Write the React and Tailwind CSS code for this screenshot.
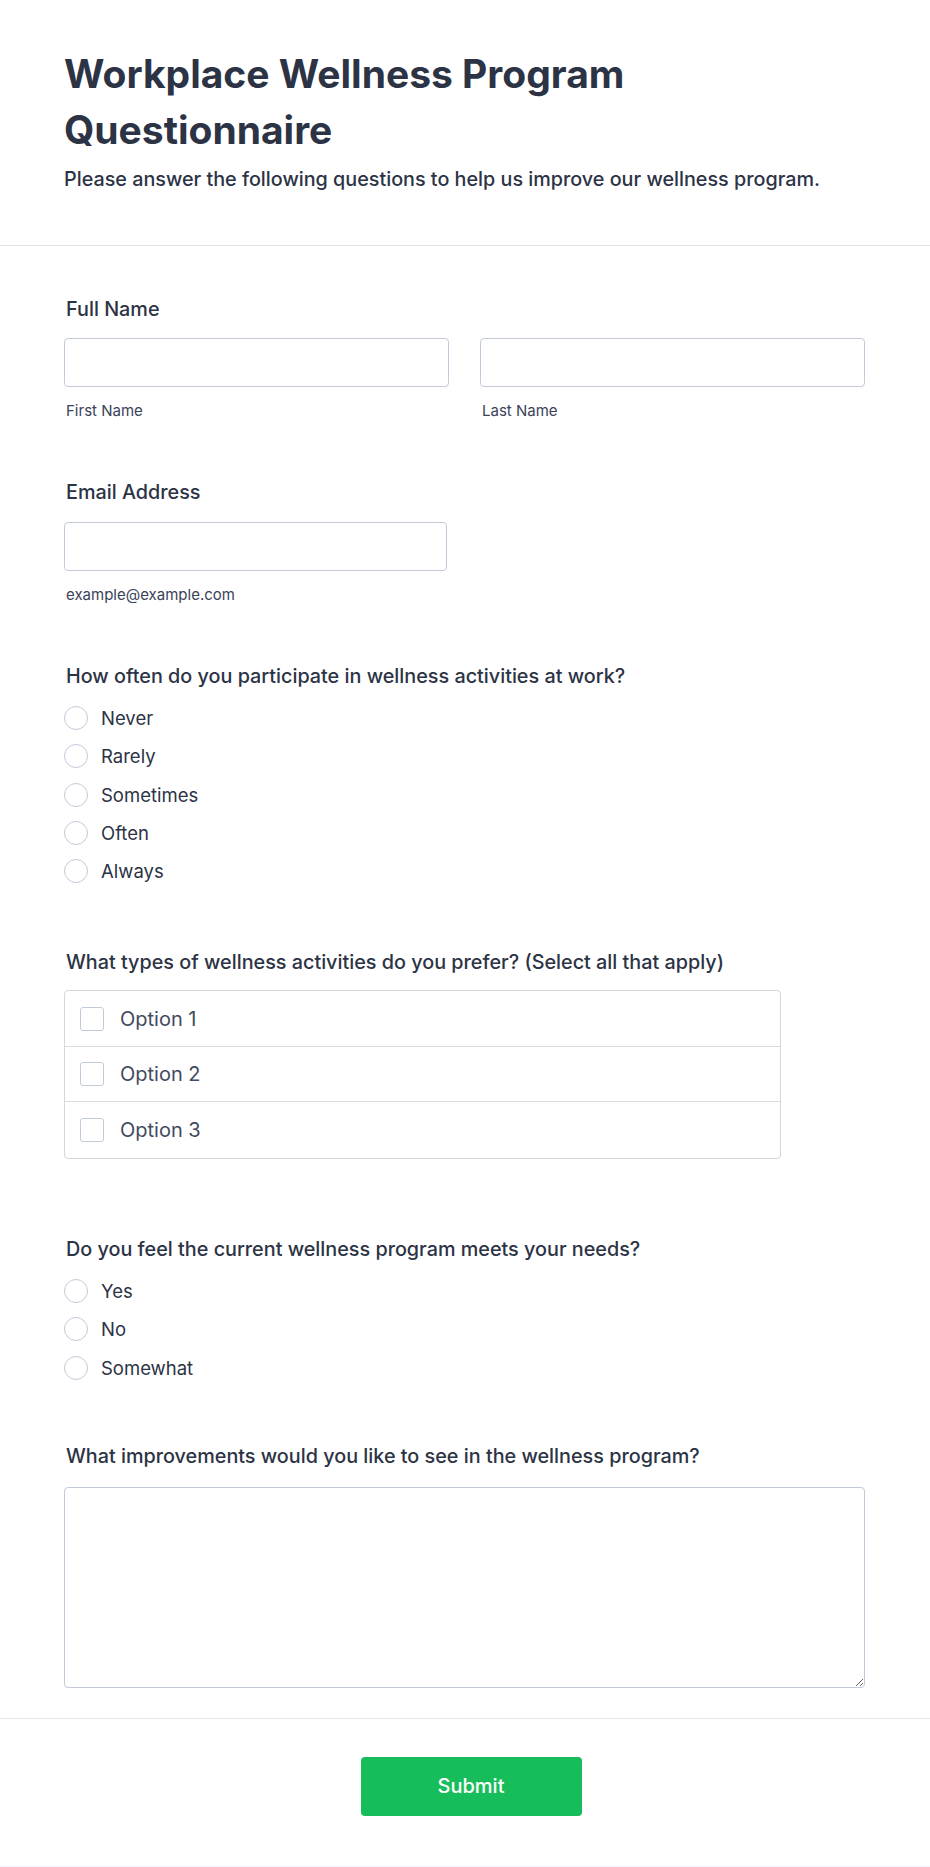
import React from "react";

const font = { fontFamily: "Inter, 'Noto Sans', sans-serif" };

const Label = ({ children, className = "" }) => (
    <div className={`pl-[2px] text-[19.8px] leading-[28px] font-medium text-[#2c3345] ${className}`}>
        {children}
    </div>
);

const SubLabel = ({ children }) => (
    <div className="mt-[14px] pl-[2px] text-[15px] leading-[20px] text-[#394258]">{children}</div>
);

const Radio = ({ label }) => (
    <label className="flex h-[38.3px] items-center gap-[13px]">
        <span className="h-[24px] w-[24px] shrink-0 rounded-full border border-[#c3cad8] bg-white" />
        <span className="text-[18.5px] leading-[28px] text-[#2c3345]">{label}</span>
    </label>
);

const App = () => {
    return (
        <div style={font} className="w-[930px] bg-white">
            <header className="border-b border-[#e2e2e6] pl-[64px] pr-[65px] pt-[46px] pb-[52px]">
                <h1 className="text-[39px] leading-[56px] font-bold text-[#2c3345]">
                    Workplace Wellness Program
                    <br />
                    Questionnaire
                </h1>
                <p className="mt-[7px] text-[19.75px] leading-[28px] font-medium text-[#2c3345]">
                    Please answer the following questions to help us improve our wellness program.
                </p>
            </header>

            <main className="pl-[64px] pr-[65px] pt-[49px] pb-[30px]">
                <Label>Full Name</Label>
                <div className="mt-[15px] grid grid-cols-2 gap-[31px]">
                    <div>
                        <input className="block h-[49px] w-full rounded-[4px] border border-[#c3cad8] bg-white" />
                        <SubLabel>First Name</SubLabel>
                    </div>
                    <div>
                        <input className="block h-[49px] w-full rounded-[4px] border border-[#c3cad8] bg-white" />
                        <SubLabel>Last Name</SubLabel>
                    </div>
                </div>

                <Label className="mt-[57px]">Email Address</Label>
                <input className="mt-[16px] block h-[49px] w-[383px] rounded-[4px] border border-[#c3cad8] bg-white" />
                <SubLabel>example@example.com</SubLabel>

                <Label className="mt-[57px]">How often do you participate in wellness activities at work?</Label>
                <div className="mt-[9px] flex flex-col">
                    {["Never", "Rarely", "Sometimes", "Often", "Always"].map((o) => (
                        <Radio key={o} label={o} />
                    ))}
                </div>

                <Label className="mt-[58px]">What types of wellness activities do you prefer? (Select all that apply)</Label>
                <div className="mt-[14px] w-[717px] rounded-[4px] border border-[#d3d6dc] divide-y divide-[#dcdcdc]">
                    {["Option 1", "Option 2", "Option 3"].map((o) => (
                        <label key={o} className="flex h-[55.5px] items-center gap-[16px] px-[15px]">
                            <span className="h-[24px] w-[24px] shrink-0 rounded-[3px] border border-[#c3cad8] bg-white" />
                            <span className="text-[20px] leading-[28px] text-[#434a5e]">{o}</span>
                        </label>
                    ))}
                </div>

                <Label className="mt-[76px]">Do you feel the current wellness program meets your needs?</Label>
                <div className="mt-[9px] flex flex-col">
                    {["Yes", "No", "Somewhat"].map((o) => (
                        <Radio key={o} label={o} />
                    ))}
                </div>

                <Label className="mt-[55px]">What improvements would you like to see in the wellness program?</Label>
                <textarea className="mt-[17px] block h-[201px] w-full rounded-[4px] border border-[#c3cad8] bg-white" />
            </main>

            <footer className="flex justify-center border-t border-[#e6e6ea] pt-[38px] pb-[50px]">
                <button className="ml-[12px] h-[59px] w-[221px] rounded-[4px] bg-[#18bd5b] text-[20px] font-medium text-white">
                    Submit
                </button>
            </footer>
            <div className="h-[2px] bg-[#f3f3fe]" />
        </div>
    );
};

export default App;
